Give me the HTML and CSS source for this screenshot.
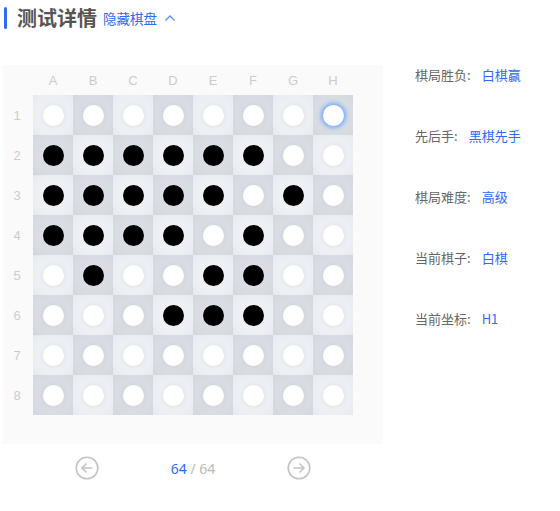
FILE: index.html
```html
<!DOCTYPE html>
<html lang="zh">
<head>
<meta charset="utf-8">
<link rel="stylesheet" href="styles.css">
</head>
<body>
<div class="page">
  <div class="header">
    <span class="bar"></span>
    <span class="title">测试详情</span>
    <span class="toggle">隐藏棋盘</span>
    <svg class="chev" width="12" height="8" viewBox="0 0 12 8"><path d="M1.5 6.5 L6 2 L10.5 6.5" fill="none" stroke="#5b8ff9" stroke-width="1.3"/></svg>
  </div>
  <div class="main">
    <div class="left">
      <div class="board">
        <div class="corner"></div>
        <div class="col">A</div><div class="col">B</div><div class="col">C</div><div class="col">D</div><div class="col">E</div><div class="col">F</div><div class="col">G</div><div class="col">H</div>
        <div class="corner"></div>

        <div class="row">1</div>
        <div class="cell l"><i class="w"></i></div><div class="cell d"><i class="w"></i></div><div class="cell l"><i class="w"></i></div><div class="cell d"><i class="w"></i></div><div class="cell l"><i class="w"></i></div><div class="cell d"><i class="w"></i></div><div class="cell l"><i class="w"></i></div><div class="cell d"><i class="w cur"></i></div>
        <div class="corner"></div>

        <div class="row">2</div>
        <div class="cell d"><i class="b"></i></div><div class="cell l"><i class="b"></i></div><div class="cell d"><i class="b"></i></div><div class="cell l"><i class="b"></i></div><div class="cell d"><i class="b"></i></div><div class="cell l"><i class="b"></i></div><div class="cell d"><i class="w"></i></div><div class="cell l"><i class="w"></i></div>
        <div class="corner"></div>

        <div class="row">3</div>
        <div class="cell l"><i class="b"></i></div><div class="cell d"><i class="b"></i></div><div class="cell l"><i class="b"></i></div><div class="cell d"><i class="b"></i></div><div class="cell l"><i class="b"></i></div><div class="cell d"><i class="w"></i></div><div class="cell l"><i class="b"></i></div><div class="cell d"><i class="w"></i></div>
        <div class="corner"></div>

        <div class="row">4</div>
        <div class="cell d"><i class="b"></i></div><div class="cell l"><i class="b"></i></div><div class="cell d"><i class="b"></i></div><div class="cell l"><i class="b"></i></div><div class="cell d"><i class="w"></i></div><div class="cell l"><i class="b"></i></div><div class="cell d"><i class="w"></i></div><div class="cell l"><i class="w"></i></div>
        <div class="corner"></div>

        <div class="row">5</div>
        <div class="cell l"><i class="w"></i></div><div class="cell d"><i class="b"></i></div><div class="cell l"><i class="w"></i></div><div class="cell d"><i class="w"></i></div><div class="cell l"><i class="b"></i></div><div class="cell d"><i class="b"></i></div><div class="cell l"><i class="w"></i></div><div class="cell d"><i class="w"></i></div>
        <div class="corner"></div>

        <div class="row">6</div>
        <div class="cell d"><i class="w"></i></div><div class="cell l"><i class="w"></i></div><div class="cell d"><i class="w"></i></div><div class="cell l"><i class="b"></i></div><div class="cell d"><i class="b"></i></div><div class="cell l"><i class="b"></i></div><div class="cell d"><i class="w"></i></div><div class="cell l"><i class="w"></i></div>
        <div class="corner"></div>

        <div class="row">7</div>
        <div class="cell l"><i class="w"></i></div><div class="cell d"><i class="w"></i></div><div class="cell l"><i class="w"></i></div><div class="cell d"><i class="w"></i></div><div class="cell l"><i class="w"></i></div><div class="cell d"><i class="w"></i></div><div class="cell l"><i class="w"></i></div><div class="cell d"><i class="w"></i></div>
        <div class="corner"></div>

        <div class="row">8</div>
        <div class="cell d"><i class="w"></i></div><div class="cell l"><i class="w"></i></div><div class="cell d"><i class="w"></i></div><div class="cell l"><i class="w"></i></div><div class="cell d"><i class="w"></i></div><div class="cell l"><i class="w"></i></div><div class="cell d"><i class="w"></i></div><div class="cell l"><i class="w"></i></div>
        <div class="corner"></div>
      </div>
      <div class="pager">
        <svg width="24" height="24" viewBox="0 0 24 24"><circle cx="12" cy="12" r="10.8" fill="none" stroke="#c4c4c4" stroke-width="1.6"/><path d="M17.5 12 H7 M11.5 7.5 L7 12 L11.5 16.5" fill="none" stroke="#c4c4c4" stroke-width="1.6"/></svg>
        <span class="count"><span class="cur-num">64</span> / 64</span>
        <svg width="24" height="24" viewBox="0 0 24 24"><circle cx="12" cy="12" r="10.8" fill="none" stroke="#c4c4c4" stroke-width="1.6"/><path d="M6.5 12 H17 M12.5 7.5 L17 12 L12.5 16.5" fill="none" stroke="#c4c4c4" stroke-width="1.6"/></svg>
      </div>
    </div>
    <div class="info">
      <div class="item"><span class="label">棋局胜负:</span><span class="val">白棋赢</span></div>
      <div class="item"><span class="label">先后手:</span><span class="val">黑棋先手</span></div>
      <div class="item"><span class="label">棋局难度:</span><span class="val">高级</span></div>
      <div class="item"><span class="label">当前棋子:</span><span class="val">白棋</span></div>
      <div class="item"><span class="label">当前坐标:</span><span class="val">H1</span></div>
    </div>
  </div>
</div>
</body>
</html>
```
FILE: styles.css
```css
* { box-sizing: border-box; }
html, body { margin: 0; padding: 0; background: #fff; }
body { font-family: "Noto Sans CJK SC", "Noto Sans", sans-serif; }
.page { padding: 6px 0 0 4px; }
.header { display: flex; align-items: center; height: 24px; }
.bar { width: 3px; height: 22px; background: #2f6bf6; border-radius: 2px; }
.title { margin-left: 10px; font-size: 20px; font-weight: 700; color: #555; line-height: 24px; }
.toggle { margin-left: 6px; font-size: 13.5px; color: #2f6bf6; line-height: 24px; }
.chev { margin-left: 7px; }
.main { display: flex; margin-top: 35px; margin-left: -1px; }
.left { width: 380px; }
.board {
  display: grid;
  grid-template-columns: 30px repeat(8, 40px) 30px;
  grid-template-rows: 30px repeat(8, 40px) 29px;
  background: #fafafa;
  width: 380px;
}
.col, .row {
  display: flex; align-items: center; justify-content: center;
  font-family: "Liberation Sans", Arial, sans-serif;
  font-size: 13px; color: #cccccc;
}
.row { padding-right: 2px; }
.cell { display: flex; align-items: center; justify-content: center; }
.cell.l { background: radial-gradient(circle, #f3f5f7 0%, #ebeef2 70%, #e6e9ee 100%); }
.cell.d { background: radial-gradient(circle, #dfe2e7 0%, #d7dbe2 70%, #d2d7de 100%); }
.cell i { display: block; width: 21px; height: 21px; border-radius: 50%; }
.cell i.w { background: #fff; box-shadow: 0 0 5px rgba(120, 130, 145, 0.18); }
.cell i.b { background: #000; }
.cell i.cur { box-shadow: 0 0 4px 2px rgba(80, 150, 255, 0.75); }
.pager {
  width: 236px; margin: 12px auto 0;
  display: flex; align-items: center; justify-content: space-between;
}
.pager svg { display: block; }
.count { font-size: 14px; color: #bbb; font-family: "Noto Sans", sans-serif; }
.cur-num { color: #2f6bf6; }
.info { margin-left: 32px; display: flex; flex-direction: column; gap: 41px; padding-top: 0; }
.item { font-size: 13px; line-height: 20px; white-space: nowrap; }
.label { color: #666; }
.val { color: #2f6bf6; margin-left: 11px; }
```
